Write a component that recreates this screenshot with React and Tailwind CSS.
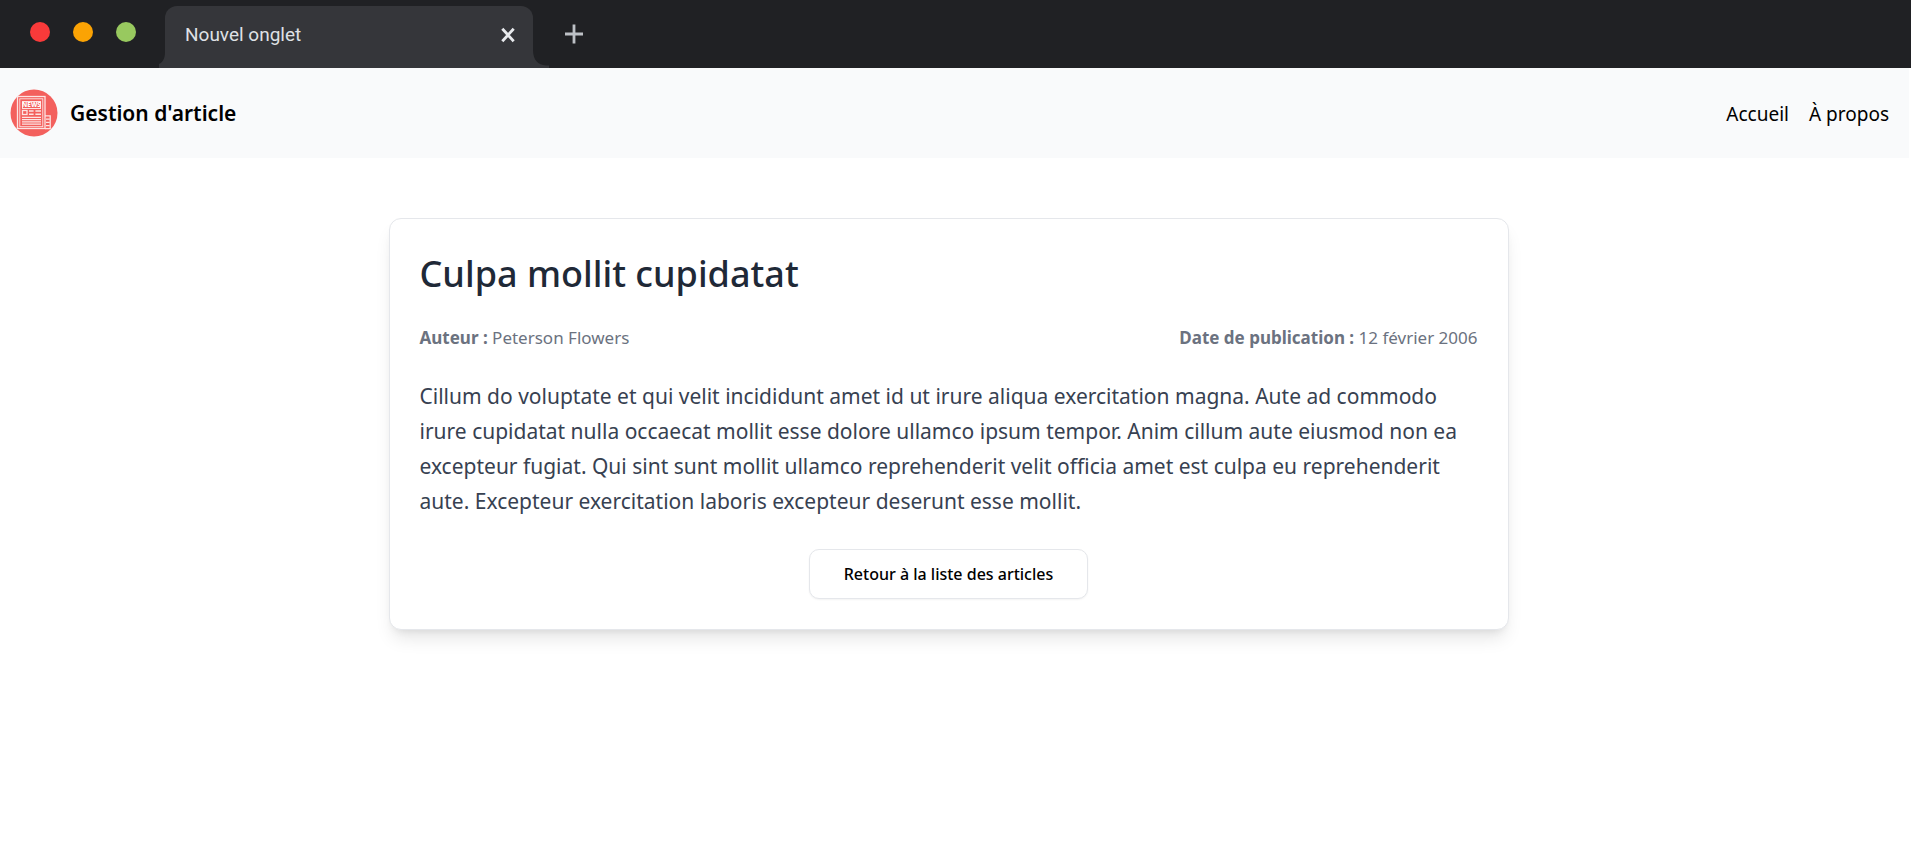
const article = {
  title: "Culpa mollit cupidatat",
  author: "Peterson Flowers",
  publishedAt: "12 février 2006",
  content:
    "Cillum do voluptate et qui velit incididunt amet id ut irure aliqua exercitation magna. Aute ad commodo irure cupidatat nulla occaecat mollit esse dolore ullamco ipsum tempor. Anim cillum aute eiusmod non ea excepteur fugiat. Qui sint sunt mollit ullamco reprehenderit velit officia amet est culpa eu reprehenderit aute. Excepteur exercitation laboris excepteur deserunt esse mollit.",
};

const NAV_LINKS = [
  { label: "Accueil", href: "#accueil" },
  { label: "À propos", href: "#a-propos" },
];

function TabBar() {
  return (
    <div className="flex h-17 bg-[#202124] pt-1.5">
      <div className="flex gap-[23px] pl-[30px] pt-4 pr-[23px]">
        <span className="h-5 w-5 rounded-full bg-[#f93a3a]"></span>
        <span className="h-5 w-5 rounded-full bg-[#fba304]"></span>
        <span className="h-5 w-5 rounded-full bg-[#98c95f]"></span>
      </div>

      {/* Active tab */}
      <div className="flex">
        <svg className="h-full w-1.5" viewBox="0 0 6 62" fill="#35363a">
          <path d="M6 46C6 52 4 56 0 58V62H6Z" />
        </svg>
        <div className="flex w-92 items-center justify-between rounded-t-xl bg-[#35363a] pb-1 pl-5 pr-[18px]">
          <span className="font-['Roboto',sans-serif] text-[19px] text-[#dfe1e5]">Nouvel onglet</span>
          <button type="button" aria-label="Fermer l'onglet">
            <svg className="h-4 w-[14px]" viewBox="0 0 14 16" fill="none" stroke="#e8eaed" strokeWidth="2.8">
              <path d="M1.3 1.8L12.7 14.2M12.7 1.8L1.3 14.2" />
            </svg>
          </button>
        </div>
        <svg className="h-full w-4" viewBox="0 0 16 62" fill="#35363a">
          <path d="M0 44C0 54 5 59 13 59.5H16V62H0Z" />
        </svg>
      </div>

      <button type="button" aria-label="Ouvrir un nouvel onglet" className="pb-1.5 pl-4">
        <svg className="h-5 w-[18px]" viewBox="0 0 18 20" fill="none" stroke="#bdc1c6" strokeWidth="2.8">
          <path d="M9 0.5V19.5M0 10H18" />
        </svg>
      </button>
    </div>
  );
}

function Logo() {
  return (
    <svg className="h-12 w-12" viewBox="0 0 48 48" fill="none" stroke="#fde4e3" aria-hidden="true">
      <circle cx="24" cy="24" r="23.5" fill="#f3605d" stroke="none" />
      <rect x="7.5" y="7.5" width="27.5" height="32" strokeWidth="1.3" />
      <rect x="9.8" y="9.8" width="23" height="27.9" strokeWidth="0.9" />
      <rect x="12.5" y="12.5" width="18" height="7" strokeWidth="1" />
      <text x="21.5" y="18.4" fontSize="6.4" fontWeight="800" textAnchor="middle" fill="#ffffff" stroke="none">
        NEWS
      </text>
      <rect x="12.5" y="21.5" width="4.5" height="4" strokeWidth="1.3" />
      <path d="M19 22H23.6M25.4 22H31M19 25.3H23.6M25.4 25.3H31" strokeWidth="1.4" />
      <path d="M12 28.3H31M12 30.6H31M12 32.9H31M12 35.2H31" strokeWidth="1.2" />
      <path d="M35 26.8H40.2V39.7H35M36 30.2H39.4M36 33.4H39.4M36 36.6H39.4" strokeWidth="1.3" />
    </svg>
  );
}

function Navbar() {
  return (
    <nav className="mr-0.5 flex h-[90px] items-center justify-between bg-[#f9fafb] pl-2.5 pr-5">
      <a href="#accueil" className="flex items-center gap-3">
        <Logo />
        <span className="pt-0.5 text-[21px] font-semibold text-black">Gestion d'article</span>
      </a>
      <ul className="flex gap-5 pt-0.5">
        {NAV_LINKS.map((link) => (
          <li key={link.label}>
            <a href={link.href} className="text-[19px] text-black hover:underline">
              {link.label}
            </a>
          </li>
        ))}
      </ul>
    </nav>
  );
}

function ArticleCard({ article }) {
  return (
    <article className="w-full max-w-280 rounded-xl border border-gray-200 bg-white p-[30px] shadow-[0_12px_18px_-4px_rgb(0_0_0/0.1),0_5px_8px_-5px_rgb(0_0_0/0.1)]">
      <h1 className="mb-[26px] text-4xl leading-[50px] font-medium text-[#1f2937]">{article.title}</h1>

      <div className="mb-7 flex justify-between text-[17px] leading-[26px] text-[#6b7280]">
        <p>
          <span className="font-bold">Auteur :</span> {article.author}
        </p>
        <p>
          <span className="font-bold">Date de publication :</span> {article.publishedAt}
        </p>
      </div>

      <p className="mb-[30px] text-[21px] leading-[35px] text-[#374151]">{article.content}</p>

      <div className="flex justify-center">
        <button
          type="button"
          className="h-[50px] rounded-[10px] border border-gray-200 bg-white px-[34px] text-base font-medium text-black shadow-xs hover:bg-gray-100"
        >
          Retour à la liste des articles
        </button>
      </div>
    </article>
  );
}

export default function App() {
  return (
    <div className="min-h-screen bg-white font-['Noto_Sans','Open_Sans',sans-serif]">
      <TabBar />
      <Navbar />
      <main className="flex justify-center pt-15 pr-3.5">
        <ArticleCard article={article} />
      </main>
    </div>
  );
}
